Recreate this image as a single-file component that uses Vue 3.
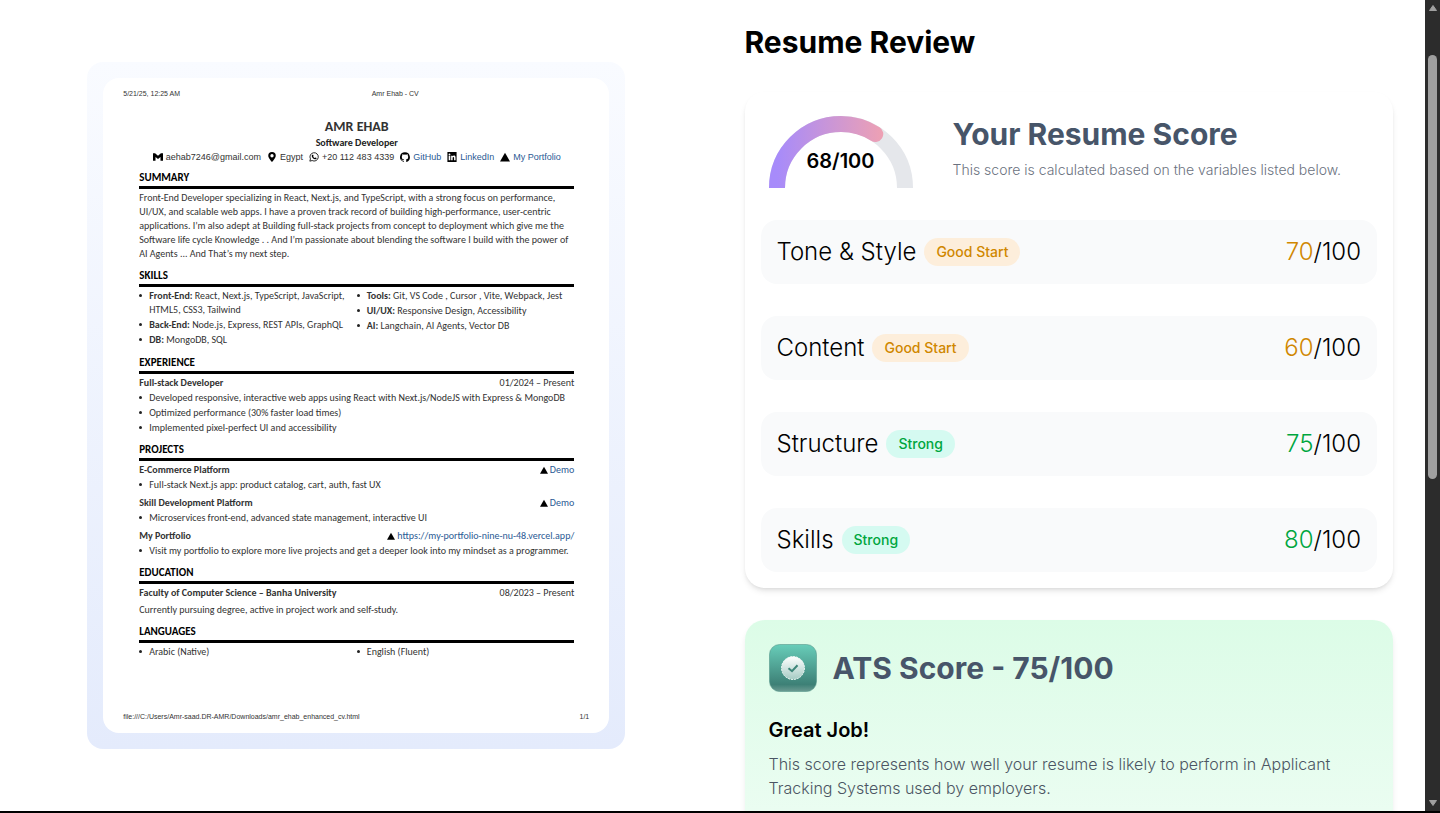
<script setup>
const contacts = [
  { icon: 'mail', text: 'aehab7246@gmail.com' },
  { icon: 'pin', text: 'Egypt' },
  { icon: 'phone', text: '+20 112 483 4339' },
  { icon: 'github', text: 'GitHub', href: '#github' },
  { icon: 'linkedin', text: 'LinkedIn', href: '#linkedin' },
  { icon: 'triangle', text: 'My Portfolio', href: '#portfolio' },
]

const projects = [
  { name: 'E-Commerce Platform', link: 'Demo', text: 'Full-stack Next.js app: product catalog, cart, auth, fast UX' },
  { name: 'Skill Development Platform', link: 'Demo', text: 'Microservices front-end, advanced state management, interactive UI' },
  { name: 'My Portfolio', link: 'https://my-portfolio-nine-nu-48.vercel.app/', text: 'Visit my portfolio to explore more live projects and get a deeper look into my mindset as a programmer.' },
]

const categories = [
  { name: 'Tone & Style', score: 70, label: 'Good Start', tone: 'fair' },
  { name: 'Content', score: 60, label: 'Good Start', tone: 'fair' },
  { name: 'Structure', score: 75, label: 'Strong', tone: 'good' },
  { name: 'Skills', score: 80, label: 'Strong', tone: 'good' },
]
</script>

<template>
  <div class="screen">
    <div class="viewport">
      <main class="page">
        <section class="preview">
          <div class="frame">
            <article class="sheet">
              <header class="meta">
                <span>5/21/25, 12:25 AM</span>
                <span class="doc-title">Amr Ehab - CV</span>
                <span></span>
              </header>

              <div class="cv">
                <h2 class="name">AMR EHAB</h2>
                <p class="role">Software Developer</p>
                <ul class="contacts">
                  <li v-for="c in contacts" :key="c.text">
                    <svg v-if="c.icon === 'mail'" viewBox="0 0 24 24" aria-hidden="true"><path d="M0 3h5l7 6 7-6h5v18h-6v-9l-6 5-6-5v9H0z" /></svg>
                    <svg v-else-if="c.icon === 'pin'" viewBox="0 0 24 24" aria-hidden="true"><path fill-rule="evenodd" d="M12 0a9 9 0 0 0-9 9c0 6 9 15 9 15s9-9 9-15a9 9 0 0 0-9-9zm0 5a4 4 0 1 1 0 8 4 4 0 0 1 0-8z" /></svg>
                    <svg v-else-if="c.icon === 'phone'" viewBox="0 0 24 24" aria-hidden="true"><path d="M2 22l1.500-5.500A10 10 0 1 1 7.500 20.500z" fill="none" stroke="#000" stroke-width="2" /><path d="M8 6.500l2 .2 1 2.800-1 1.500c1 2 2 2.800 4 3.600l1.500-1.500 2.700 1.400c.2 2-1.600 3-3.200 3C11 17 6.500 12.500 6.500 9.300c0-1.200.6-2.300 1.500-2.800z" /></svg>
                    <svg v-else-if="c.icon === 'github'" viewBox="0 0 24 24" aria-hidden="true"><path d="M12 .5a12 12 0 0 0-3.800 23.400c.6.1.8-.3.8-.6v-2.100c-3.300.7-4-1.600-4-1.600-.6-1.400-1.400-1.800-1.400-1.800-1-.7.1-.7.1-.7 1.200.1 1.900 1.200 1.900 1.200 1 1.800 2.800 1.300 3.500 1 .1-.8.400-1.300.8-1.600-2.700-.3-5.500-1.300-5.500-5.900 0-1.300.5-2.400 1.200-3.200-.1-.3-.5-1.500.1-3.200 0 0 1-.3 3.300 1.200a11.500 11.500 0 0 1 6 0C17.300 5.100 18.300 5.400 18.300 5.400c.6 1.700.2 2.900.1 3.200.8.800 1.200 1.900 1.200 3.200 0 4.600-2.800 5.600-5.500 5.900.4.4.9 1.100.9 2.200v3.300c0 .3.200.7.800.6A12 12 0 0 0 12 .5z" /></svg>
                    <svg v-else-if="c.icon === 'linkedin'" viewBox="0 0 24 24" aria-hidden="true"><path fill-rule="evenodd" d="M1 0h22v24H1zM4 9v11h4V9zM6 3.500a2.200 2.200 0 1 0 0 4.400 2.200 2.200 0 0 0 0-4.400zM10 9v11h3.500v-6c0-3 3.500-3 3.500 0v6h3.500v-7c0-5-5-5.500-7-2.800V9z" /></svg>
                    <svg v-else viewBox="0 0 24 24" aria-hidden="true"><path d="M12 2l12 21H0z" /></svg>
                    <a v-if="c.href" :href="c.href">{{ c.text }}</a>
                    <span v-else>{{ c.text }}</span>
                  </li>
                </ul>

                <section class="block">
                  <h3>SUMMARY</h3>
                  <p>
                    Front-End Developer specializing in React, Next.js, and TypeScript, with a strong focus on performance,<br />
                    UI/UX, and scalable web apps. I have a proven track record of building high-performance, user-centric<br />
                    applications. I’m also adept at Building full-stack projects from concept to deployment which give me the<br />
                    Software life cycle Knowledge . . And I’m passionate about blending the software I build with the power of<br />
                    AI Agents ... And That’s my next step.
                  </p>
                </section>

                <section class="block">
                  <h3>SKILLS</h3>
                  <div class="columns">
                    <ul class="list">
                      <li><b>Front-End:</b> React, Next.js, TypeScript, JavaScript,<br />HTML5, CSS3, Tailwind</li>
                      <li><b>Back-End:</b> Node.js, Express, REST APIs, GraphQL</li>
                      <li><b>DB:</b> MongoDB, SQL</li>
                    </ul>
                    <ul class="list">
                      <li><b>Tools:</b> Git, VS Code , Cursor , Vite, Webpack, Jest</li>
                      <li><b>UI/UX:</b> Responsive Design, Accessibility</li>
                      <li><b>AI:</b> Langchain, AI Agents, Vector DB</li>
                    </ul>
                  </div>
                </section>

                <section class="block">
                  <h3>EXPERIENCE</h3>
                  <div class="entry"><b>Full-stack Developer</b><span>01/2024 – Present</span></div>
                  <ul class="list">
                    <li>Developed responsive, interactive web apps using React with Next.js/NodeJS with Express &amp; MongoDB</li>
                    <li>Optimized performance (30% faster load times)</li>
                    <li>Implemented pixel-perfect UI and accessibility</li>
                  </ul>
                </section>

                <section class="block">
                  <h3>PROJECTS</h3>
                  <div v-for="p in projects" :key="p.name" class="project">
                    <div class="entry">
                      <b>{{ p.name }}</b>
                      <a href="#demo"><svg viewBox="0 0 24 24" aria-hidden="true"><path d="M12 2l12 21H0z" /></svg>{{ p.link }}</a>
                    </div>
                    <ul class="list"><li>{{ p.text }}</li></ul>
                  </div>
                </section>

                <section class="block">
                  <h3>EDUCATION</h3>
                  <div class="entry"><b>Faculty of Computer Science – Banha University</b><span>08/2023 – Present</span></div>
                  <p class="note">Currently pursuing degree, active in project work and self-study.</p>
                </section>

                <section class="block">
                  <h3>LANGUAGES</h3>
                  <div class="columns">
                    <ul class="list"><li>Arabic (Native)</li></ul>
                    <ul class="list"><li>English (Fluent)</li></ul>
                  </div>
                </section>
              </div>

              <footer class="meta foot">
                <span>file:///C:/Users/Amr-saad.DR-AMR/Downloads/amr_ehab_enhanced_cv.html</span>
                <span>1/1</span>
              </footer>
            </article>
          </div>
        </section>

        <section class="review">
          <h1>Resume Review</h1>

          <div class="card">
            <div class="overall">
              <div class="gauge">
                <svg viewBox="0 0 144 72" aria-hidden="true">
                  <defs>
                    <linearGradient id="arc" x1="0" y1="0" x2="1" y2="0">
                      <stop offset="0" stop-color="#a78bfa" />
                      <stop offset="1" stop-color="#fca5a5" />
                    </linearGradient>
                  </defs>
                  <path d="M8 72a64 64 0 0 1 128 0" fill="none" stroke="#e5e7eb" stroke-width="16" />
                  <path d="M8 72a64 64 0 0 1 128 0" fill="none" stroke="url(#arc)" stroke-width="16" stroke-linecap="round" pathLength="100" stroke-dasharray="68 100" />
                </svg>
                <strong>68/100</strong>
              </div>
              <div class="intro">
                <h2>Your Resume Score</h2>
                <p>This score is calculated based on the variables listed below.</p>
              </div>
            </div>

            <div v-for="c in categories" :key="c.name" class="category">
              <div class="row" :class="c.tone">
                <span class="label">{{ c.name }}</span>
                <span class="badge">{{ c.label }}</span>
                <span class="points"><span class="value">{{ c.score }}</span>/100</span>
              </div>
            </div>
          </div>

          <div class="ats">
            <div class="ats-head">
              <svg viewBox="0 0 48 48" aria-hidden="true">
                <defs>
                  <linearGradient id="tile" x1="0" y1="0" x2="0" y2="1">
                    <stop offset="0" stop-color="#68cdb9" />
                    <stop offset="0.85" stop-color="#3d8076" />
                    <stop offset="1" stop-color="#6b9b92" />
                  </linearGradient>
                  <linearGradient id="seal" x1="0" y1="0" x2="0" y2="1">
                    <stop offset="0" stop-color="#ffffff" />
                    <stop offset="1" stop-color="#a5cbc4" />
                  </linearGradient>
                </defs>
                <rect x="0.500" y="0.500" width="47" height="47" rx="10" fill="url(#tile)" stroke="#59988c" stroke-opacity="0.600" />
                <circle cx="24" cy="24" r="11.500" fill="url(#seal)" stroke="#e9f5f2" stroke-dasharray="2 1" />
                <path d="M19.500 24.200l3.500 3 5.500-6" fill="none" stroke="#3d8579" stroke-width="2" />
              </svg>
              <h2>ATS Score - 75/100</h2>
            </div>
            <h3>Great Job!</h3>
            <p>This score represents how well your resume is likely to perform in Applicant Tracking Systems used by employers.</p>
          </div>
        </section>
      </main>

      <div class="scrollbar" aria-hidden="true">
        <svg viewBox="0 0 10 8"><path d="M5 1.500L8.500 6.500h-7z" fill="#a0a0a0" stroke="#a0a0a0" stroke-linejoin="round" /></svg>
        <div class="track"><div class="thumb"></div></div>
        <svg viewBox="0 0 10 8"><path d="M5 6.500L1.500 1.500h7z" fill="#a0a0a0" stroke="#a0a0a0" stroke-linejoin="round" /></svg>
      </div>
    </div>
  </div>
</template>

<style>
body {
  margin: 0;
}
</style>

<style scoped>
* {
  box-sizing: border-box;
}
h1, h2, h3, p, ul {
  margin: 0;
  padding: 0;
}
ul {
  list-style: none;
}
.screen {
  height: 100vh;
  overflow: hidden;
  border-bottom: 2px solid #000;
  background: #fff;
  color: #000;
  font-family: Inter, "Liberation Sans", sans-serif;
}
.viewport {
  display: flex;
  height: 100%;
}
.page {
  flex: 1;
  min-width: 0;
  display: grid;
  grid-template-columns: 1fr 1fr;
  grid-template-rows: 100%;
  overflow: hidden;
}

/* Resume preview */
.preview {
  display: flex;
  align-items: center;
  justify-content: center;
  padding: 0 16px;
}
.frame {
  width: 100%;
  max-width: 538px;
  padding: 16px;
  border-radius: 16px;
  background: linear-gradient(to bottom, #f9fbff, #e4ebfc);
}
.sheet {
  padding: 12px 20px;
  border-radius: 16px;
  background: #fff;
  color: #333;
  font-family: Carlito, Lato, sans-serif;
  font-size: 10px;
  line-height: 14px;
  white-space: nowrap;
}
.meta {
  display: grid;
  grid-template-columns: 1fr auto 1fr;
  font-family: "Liberation Sans", Arial, sans-serif;
  font-size: 7px;
  line-height: 8px;
}
.doc-title {
  padding-left: 78px;
}
.foot {
  display: flex;
  justify-content: space-between;
  margin-top: 53px;
}
.cv {
  padding: 21px 15px 0 16px;
}
.name {
  font-size: 14px;
  line-height: 16px;
  text-align: center;
}
.role {
  color: #222;
  font-weight: 700;
  line-height: 14px;
  margin-top: 1px;
  text-align: center;
}
.contacts {
  display: flex;
  justify-content: center;
  gap: 6px;
  font-family: "Liberation Sans", Arial, sans-serif;
  font-size: 9px;
}
.contacts li {
  display: flex;
  align-items: center;
  gap: 3px;
}
.contacts svg {
  width: 10px;
  height: 10px;
}
.sheet a {
  color: #2a5a94;
  text-decoration: none;
}
.block {
  margin-top: 7px;
}
.block + .block {
  margin-top: 8px;
}
.block h3 {
  margin-bottom: 2px;
  padding-bottom: 1px;
  border-bottom: 3px solid #000;
  color: #000;
  font-size: 11px;
  line-height: 14px;
}
.columns {
  display: grid;
  grid-template-columns: 1fr 1fr;
}
.list li {
  position: relative;
  margin-bottom: 1px;
  padding-left: 10px;
}
.list li::before {
  content: "";
  position: absolute;
  top: 5px;
  left: 0;
  width: 3px;
  height: 3px;
  border-radius: 50%;
  background: #222;
}
.entry {
  display: flex;
  justify-content: space-between;
  margin-bottom: 1px;
}
.entry a {
  display: flex;
  align-items: center;
  gap: 2px;
}
.entry svg {
  width: 8px;
  height: 8px;
}
.project + .project {
  margin-top: 4px;
}
.note {
  margin-top: 3px;
}

/* Review column */
.review {
  padding: 24px 32px 0;
}
h1, .intro h2, .ats h2 {
  font-size: 30px;
  line-height: 36px;
  font-weight: 700;
}
.intro h2, .ats h2 {
  color: #475569;
}
.card {
  margin-top: 32px;
  border-radius: 20px;
  box-shadow: 0 4px 6px -1px rgba(0, 0, 0, 0.1), 0 2px 4px -2px rgba(0, 0, 0, 0.1);
}
.overall {
  display: flex;
  gap: 40px;
  padding: 24px 24px 16px;
}
.gauge {
  position: relative;
  width: 144px;
  height: 72px;
}
.gauge svg {
  display: block;
  width: 100%;
}
.gauge strong {
  position: absolute;
  inset: 31px 0 auto;
  font-size: 20px;
  line-height: 28px;
  font-weight: 600;
  text-align: center;
}
.intro p {
  margin-top: 8px;
  color: #6b7280;
  font-size: 14px;
  line-height: 20px;
  font-weight: 300;
}
.category {
  padding: 16px;
}
.row {
  display: flex;
  align-items: center;
  gap: 8px;
  height: 64px;
  padding: 0 16px;
  border-radius: 16px;
  background: #f9fafb;
  font-size: 24px;
  line-height: 32px;
  font-weight: 300;
}
.badge {
  padding: 4px 12px;
  border-radius: 14px;
  font-size: 14px;
  line-height: 20px;
  font-weight: 500;
}
.points {
  margin-left: auto;
}
.fair .badge {
  background: #fdeedb;
  color: #d08700;
}
.fair .value {
  color: #d08700;
}
.good .badge {
  background: #d5faf1;
  color: #00a63e;
}
.good .value {
  color: #00a63e;
}
.ats {
  margin-top: 32px;
  padding: 24px 24px 48px;
  border-radius: 20px;
  background: linear-gradient(to bottom, #dcfce7, #edfdf3);
  box-shadow: 0 4px 6px -1px rgba(0, 0, 0, 0.1);
}
.ats-head {
  display: flex;
  align-items: center;
  gap: 16px;
}
.ats-head svg {
  width: 48px;
  height: 48px;
}
.ats h3 {
  margin-top: 24px;
  font-size: 20px;
  line-height: 28px;
  font-weight: 600;
}
.ats p {
  margin-top: 8px;
  color: #4b5563;
  font-size: 16px;
  line-height: 24px;
  font-weight: 300;
}

/* Window scrollbar */
.scrollbar {
  display: flex;
  flex-direction: column;
  align-items: center;
  justify-content: space-between;
  width: 15px;
  padding: 4px 0;
  background: #2c2c2c;
}
.scrollbar svg {
  width: 10px;
  height: 8px;
}
.track {
  flex: 1;
  padding-top: 43px;
}
.thumb {
  width: 9px;
  height: 57%;
  border-radius: 5px;
  background: #9f9f9f;
}
</style>
